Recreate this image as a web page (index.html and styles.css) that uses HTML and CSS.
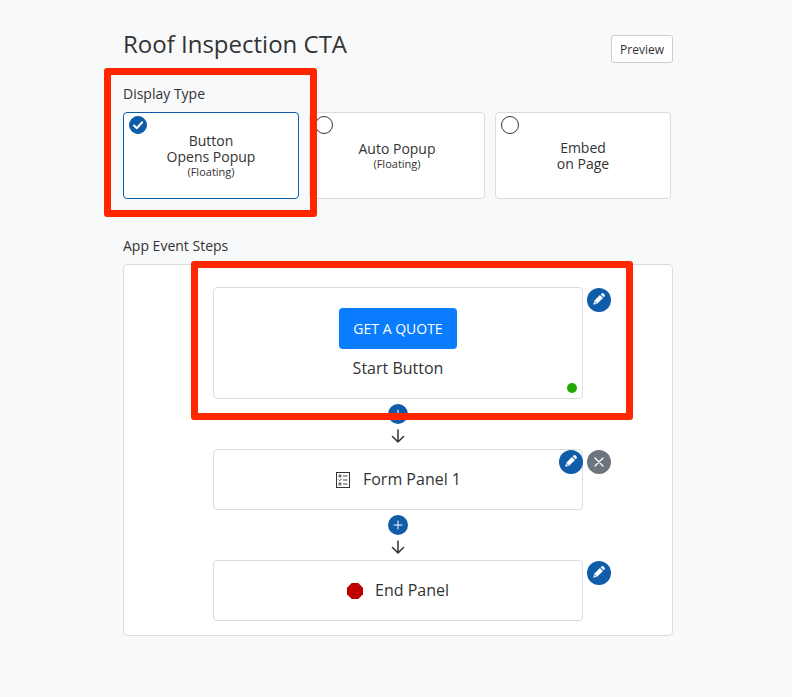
FILE: index.html
```html
<!DOCTYPE html>
<html lang="en">
<head>
    <meta charset="UTF-8">
    <meta name="viewport" content="width=device-width, initial-scale=1">
    <title>Roof Inspection CTA</title>
    <link rel="stylesheet" href="styles.css">
</head>
<body>
    <!-- Shared icons -->
    <svg class="icon-defs" aria-hidden="true">
        <symbol id="icon-pencil" viewBox="0 0 12 12">
            <path fill="currentColor" d="M6.900 2 10 5.100 4.200 10.700 1 11.600a.5.5 0 0 1-.6-.6L1.300 7.800z"/>
            <path fill="currentColor" d="M7.700 1.300 8.500.6a1.500 1.500 0 0 1 2.100 0l.8.8a1.500 1.500 0 0 1 0 2.100l-.7.800z"/>
            <path fill="none" stroke="#0f5ca8" stroke-width=".7" d="M1.900 8.300l.3 1.500 1.600.4"/>
        </symbol>
        <symbol id="icon-plus" viewBox="0 0 10 10">
            <path fill="none" stroke="currentColor" stroke-linecap="round" d="M5 1v8M1 5h8"/>
        </symbol>
        <symbol id="icon-arrow" viewBox="0 0 14 14">
            <path fill="none" stroke="currentColor" stroke-width="1.500" stroke-linecap="round" stroke-linejoin="round" d="M7 1v12M1.500 7.500 7 13l5.500-5.500"/>
        </symbol>
    </svg>

    <main class="container">
        <header class="header">
            <h1>Roof Inspection CTA</h1>
            <button type="button" class="preview">Preview</button>
        </header>

        <!-- Display Type -->
        <section class="display-type">
            <h2>Display Type</h2>
            <div class="options">
                <label class="option selected">
                    <input type="radio" name="displayType" value="button" checked>
                    <svg class="check" viewBox="0 0 18 18" aria-hidden="true"><path fill="none" stroke="currentColor" stroke-width="2" stroke-linecap="round" stroke-linejoin="round" d="M5 9.500 7.800 12.200 13.200 6.300"/></svg>
                    <span>Button<br>Opens Popup</span>
                    <small>(Floating)</small>
                </label>
                <label class="option">
                    <input type="radio" name="displayType" value="auto">
                    <span>Auto Popup</span>
                    <small>(Floating)</small>
                </label>
                <label class="option">
                    <input type="radio" name="displayType" value="embed">
                    <span>Embed<br>on Page</span>
                </label>
            </div>
            <div class="highlight highlight-type"></div>
        </section>

        <!-- App Event Steps -->
        <section class="steps">
            <h2>App Event Steps</h2>
            <div class="panel">
                <div class="step step-start">
                    <button type="button" class="quote">GET A QUOTE</button>
                    <span>Start Button</span>
                    <div class="actions">
                        <button type="button" class="round" aria-label="Edit start button"><svg class="pencil"><use href="#icon-pencil"/></svg></button>
                    </div>
                    <i class="status"></i>
                    <div class="highlight highlight-start"></div>
                </div>

                <div class="connector">
                    <button type="button" class="add" aria-label="Add step"><svg class="plus"><use href="#icon-plus"/></svg></button>
                    <svg class="arrow"><use href="#icon-arrow"/></svg>
                </div>

                <div class="step">
                    <svg class="step-icon" viewBox="0 0 16 16" aria-hidden="true">
                        <rect x="1.500" y=".5" width="13" height="15" fill="none" stroke="currentColor"/>
                        <path fill="none" stroke="currentColor" stroke-width=".9" d="M8 4h4.500M8 8h4.500M8 12h4.500M3.500 7.500l1.200 1.200 2-2"/>
                        <circle cx="5" cy="4" r="1.100" fill="none" stroke="currentColor"/>
                        <circle cx="5" cy="12" r="1.100" fill="none" stroke="currentColor"/>
                    </svg>
                    <span>Form Panel 1</span>
                    <div class="actions">
                        <button type="button" class="round" aria-label="Edit form panel"><svg class="pencil"><use href="#icon-pencil"/></svg></button>
                        <button type="button" class="round remove" aria-label="Remove form panel"><svg class="plus" viewBox="0 0 10 10"><path fill="none" stroke="currentColor" stroke-width="1.300" stroke-linecap="round" d="M1 1l8 8M9 1 1 9"/></svg></button>
                    </div>
                </div>

                <div class="connector">
                    <button type="button" class="add" aria-label="Add step"><svg class="plus"><use href="#icon-plus"/></svg></button>
                    <svg class="arrow"><use href="#icon-arrow"/></svg>
                </div>

                <div class="step">
                    <svg class="step-icon" viewBox="0 0 16 16" aria-hidden="true"><path fill="#bf0000" d="M4.700 0h6.600L16 4.700v6.600L11.300 16H4.700L0 11.300V4.700z"/></svg>
                    <span>End Panel</span>
                    <div class="actions">
                        <button type="button" class="round" aria-label="Edit end panel"><svg class="pencil"><use href="#icon-pencil"/></svg></button>
                    </div>
                </div>
            </div>
        </section>
    </main>
</body>
</html>
```

FILE: styles.css
```css
* {
    box-sizing: border-box;
}
body {
    font-family: "Open Sans", "Noto Sans", sans-serif;
    font-size: 14px;
    color: #333;
    background-color: #f8f9fb;
    margin: 0;
    padding: 28px 16px 60px 20px;
}
svg {
    display: block;
}
button {
    font-family: inherit;
    cursor: pointer;
    padding: 0;
    border: none;
}
.icon-defs {
    position: absolute;
    width: 0;
    height: 0;
}
.container {
    max-width: 550px;
    margin: 0 auto;
}
.header {
    display: flex;
    justify-content: space-between;
    align-items: flex-end;
    margin-bottom: 20px;
}
h1 {
    font-size: 24px;
    line-height: 32px;
    font-weight: normal;
    margin: 0 0 3px;
}
h2 {
    font-size: 14px;
    line-height: 20px;
    font-weight: normal;
    margin: 0 0 8px;
}
.preview {
    height: 28px;
    padding: 0 8px;
    font-size: 12px;
    color: #333;
    background: #fff;
    border: 1px solid #ccc;
    border-radius: 3px;
}

/* Display type */
.display-type {
    position: relative;
    margin-bottom: 37px;
    padding-top: 1px;
}
.options {
    display: grid;
    grid-template-columns: repeat(3, 1fr);
    gap: 10px;
    padding-right: 2px;
}
.option {
    position: relative;
    display: flex;
    flex-direction: column;
    align-items: center;
    justify-content: center;
    min-height: 87px;
    line-height: 16px;
    text-align: center;
    background: #fff;
    border: 1px solid #dcdcdc;
    border-radius: 4px;
    cursor: pointer;
}
.option.selected {
    border-color: #0f5ca8;
}
.option small {
    font-size: 11px;
    line-height: 14px;
}
.option input {
    appearance: none;
    position: absolute;
    top: 3px;
    left: 5px;
    width: 18px;
    height: 18px;
    margin: 0;
    border: 1px solid #333;
    border-radius: 50%;
}
.option input:checked {
    background: #0f5ca8;
    border-color: #0f5ca8;
}
.check {
    position: absolute;
    top: 3px;
    left: 5px;
    width: 18px;
    height: 18px;
    color: #fff;
}

/* Event steps */
.panel {
    display: flex;
    flex-direction: column;
    align-items: center;
    padding: 22px 16px 14px;
    background: #fff;
    border: 1px solid #dcdcdc;
    border-radius: 4px;
}
.step {
    position: relative;
    display: flex;
    align-items: center;
    justify-content: center;
    gap: 12px;
    width: 100%;
    max-width: 370px;
    padding: 18px;
    font-size: 16px;
    line-height: 23px;
    border: 1px solid #dcdcdc;
    border-radius: 4px;
}
.step-start {
    flex-direction: column;
    gap: 8px;
    padding: 20px 20px 18px;
}
.quote {
    padding: 10px 14px;
    font-size: 14px;
    line-height: 21px;
    font-weight: 500;
    color: #fff;
    background: #0a7cff;
    border-radius: 4px;
}
.step-icon {
    width: 16px;
    height: 16px;
}
.actions {
    position: absolute;
    top: 0;
    right: -29px;
    display: flex;
    gap: 4px;
}
.round, .add {
    display: flex;
    align-items: center;
    justify-content: center;
    width: 24px;
    height: 24px;
    color: #fff;
    background: #0f5ca8;
    border-radius: 50%;
}
.add {
    width: 20px;
    height: 20px;
}
.remove {
    background: #6c757d;
}
.pencil {
    width: 12px;
    height: 12px;
    margin-bottom: 2px;
}
.plus {
    width: 10px;
    height: 10px;
}
.status {
    position: absolute;
    right: 5px;
    bottom: 5px;
    width: 10px;
    height: 10px;
    background: #22a800;
    border-radius: 50%;
}
.connector {
    display: flex;
    flex-direction: column;
    align-items: center;
    gap: 5px;
    padding: 5px 0 6px;
}
.arrow {
    width: 14px;
    height: 14px;
}

/* Red callout frames */
.highlight {
    position: absolute;
    z-index: 1;
    border: 7px solid #ff2600;
    border-radius: 3px;
    pointer-events: none;
}
.highlight-type {
    top: -15px;
    bottom: -18px;
    left: -19px;
    width: 213px;
}
.highlight-start {
    top: -27px;
    bottom: -22px;
    left: -23px;
    right: -51px;
}
```
